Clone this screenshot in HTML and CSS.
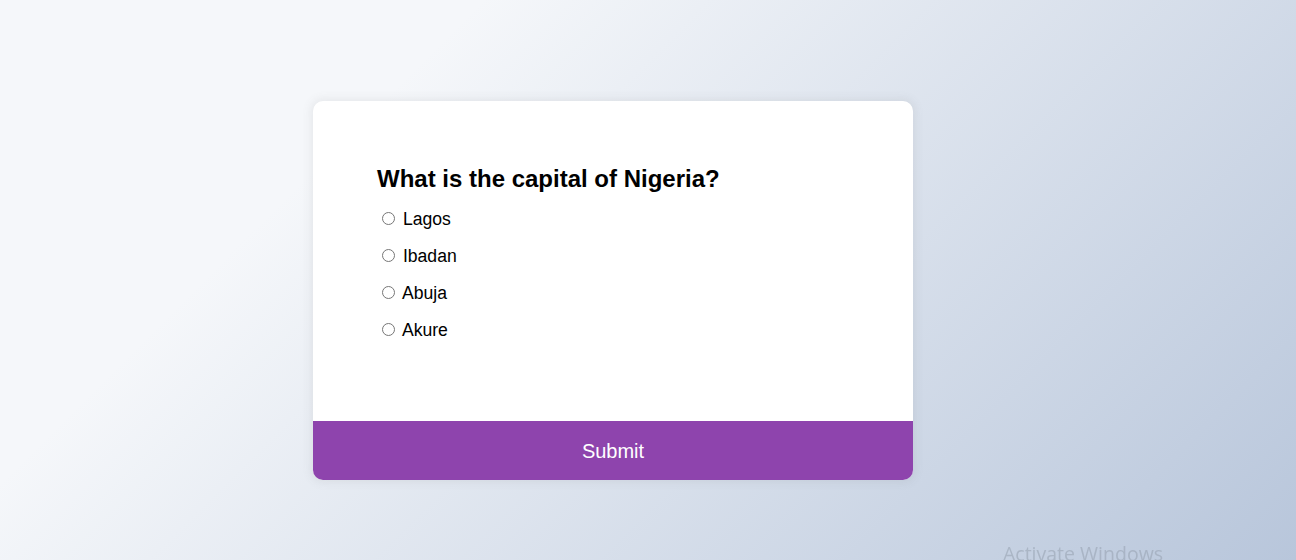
FILE: index.html
```html
<!DOCTYPE html>
<html lang="en">
<head>
<meta charset="UTF-8">
<title>Quiz</title>
<link rel="stylesheet" href="styles.css">
</head>
<body>
  <div class="quiz">
    <div class="quiz-header">
      <h2 class="question">What is the capital of Nigeria?</h2>
      <ul class="answers">
        <li><input type="radio" name="answer" id="a"> <label for="a">Lagos</label></li>
        <li><input type="radio" name="answer" id="b"> <label for="b">Ibadan</label></li>
        <li><input type="radio" name="answer" id="c"> <label for="c">Abuja</label></li>
        <li><input type="radio" name="answer" id="d"> <label for="d">Akure</label></li>
      </ul>
    </div>
    <button class="submit">Submit</button>
  </div>
  <div class="watermark">Activate Windows</div>
</body>
</html>
```
FILE: styles.css
```css
html, body {
  margin: 0;
  height: 100%;
}
body {
  font-family: "Liberation Sans", Arial, sans-serif;
  background: linear-gradient(315deg, #b8c6db 0%, #f5f7fa 74%);
  padding: 101px 0 0 313px;
  box-sizing: border-box;
  overflow: hidden;
}
.quiz {
  width: 600px;
  background: #fff;
  border-radius: 10px;
  box-shadow: 0 0 10px 2px rgba(100, 100, 100, 0.1);
  overflow: hidden;
}
.quiz-header {
  padding: 64px;
}
.question {
  margin: 0;
  font-size: 24px;
  font-weight: bold;
  color: #000;
}
.answers {
  list-style: none;
  margin: 0;
  padding: 0;
}
.answers li {
  font-size: 17.6px;
  margin: 16px 0;
  color: #000;
}
.answers input {
  margin: 3px 3px 0 5px;
}
.submit {
  display: block;
  width: 100%;
  border: none;
  background: #8e44ad;
  color: #fff;
  font-family: "Liberation Sans", Arial, sans-serif;
  font-size: 20px;
  padding: 19px 18px 17px;
  line-height: 23px;
  cursor: pointer;
}
.watermark {
  position: fixed;
  left: 1003px;
  top: 540px;
  font-family: "Open Sans", "DejaVu Sans", sans-serif;
  font-size: 19.5px;
  color: rgba(150, 160, 175, 0.55);
  white-space: nowrap;
}
```
